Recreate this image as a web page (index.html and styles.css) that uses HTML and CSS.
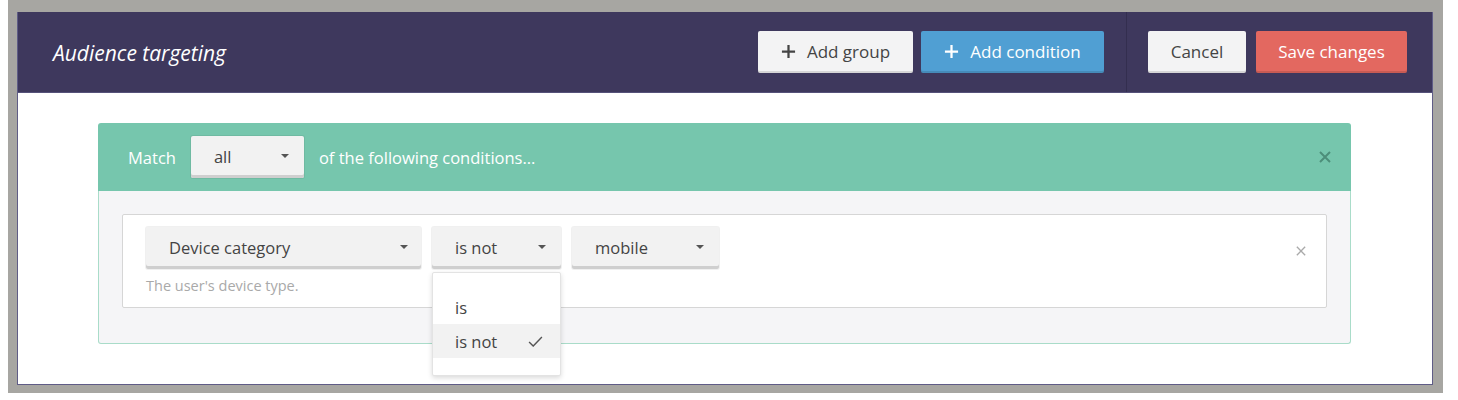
FILE: index.html
```html
<!DOCTYPE html>
<html>
<head>
<meta charset="utf-8">
<link rel="stylesheet" href="styles.css">
</head>
<body>
<div class="frame">
  <div class="window">
    <header class="topbar">
      <h1 class="title">Audience targeting</h1>
      <div class="actions">
        <div class="group-left">
          <button class="btn btn-light"><svg class="plus" viewBox="0 0 16 16"><path d="M8 1v14M1 8h14"/></svg>Add group</button>
          <button class="btn btn-blue"><svg class="plus" viewBox="0 0 16 16"><path d="M8 1v14M1 8h14"/></svg>Add condition</button>
        </div>
        <div class="group-right">
          <button class="btn btn-light btn-cancel">Cancel</button>
          <button class="btn btn-red">Save changes</button>
        </div>
      </div>
    </header>
    <main class="content">
      <section class="panel">
        <div class="panel-head">
          <span class="label">Match</span>
          <div class="select select-all"><span>all</span><i class="caret"></i></div>
          <span class="label">of the following conditions...</span>
          <svg class="close close-head" viewBox="0 0 12 12"><path d="M1 1l10 10M11 1L1 11"/></svg>
        </div>
        <div class="panel-body">
          <div class="card">
            <div class="card-main">
              <div class="row">
                <div class="select select-field"><span>Device category</span><i class="caret"></i></div>
                <div class="op-wrap">
                  <div class="select select-op"><span>is not</span><i class="caret"></i></div>
                  <ul class="menu">
                    <li class="menu-item">is</li>
                    <li class="menu-item active">is not<svg class="check" viewBox="0 0 16 12"><path d="M1 6.5l4.5 4.5L15 1"/></svg></li>
                  </ul>
                </div>
                <div class="select select-val"><span>mobile</span><i class="caret"></i></div>
              </div>
              <p class="hint">The user's device type.</p>
            </div>
            <svg class="close close-card" viewBox="0 0 12 12"><path d="M1 1l10 10M11 1L1 11"/></svg>
          </div>
        </div>
      </section>
    </main>
  </div>
</div>
</body>
</html>
```

FILE: styles.css
```css
* { box-sizing: border-box; }
html, body { margin: 0; padding: 0; background: #fff; }
body { font-family: "Open Sans", "Noto Sans", sans-serif; color: #444; }

.frame {
  margin-left: 8px;
  width: 1435px;
  height: 393px;
  background: #a7a6a2;
  padding: 12px 10px 8px 9px;
}
.window {
  height: 373px;
  background: #fff;
  border: 1px solid #5f5c86;
  border-top: none;
  display: flex;
  flex-direction: column;
}
.topbar {
  height: 81px;
  background: #3e385d;
  display: flex;
  align-items: center;
  justify-content: space-between;
  padding-left: 35px;
  border-bottom: 1px solid #56527a;
}
.title {
  margin: 0 0 -2px;
  font-size: 21px;
  font-weight: 400;
  font-style: italic;
  color: #fff;
}
.actions { display: flex; height: 100%; }
.group-left {
  display: flex;
  align-items: center;
  gap: 8px;
  padding-right: 22px;
  border-right: 1px solid #332e4f;
}
.group-right {
  display: flex;
  align-items: center;
  gap: 10px;
  padding-left: 21px;
  padding-right: 25px;
}
.btn {
  height: 42px;
  border: none;
  border-radius: 2px;
  font-family: "Open Sans", "Noto Sans", sans-serif;
  font-size: 17px;
  display: flex;
  align-items: center;
  justify-content: center;
  gap: 11px;
  padding: 0 0 2px;
  box-shadow: inset 0 -2px 0 rgba(0,0,0,0.12);
  cursor: pointer;
}
.btn-light { background: #f3f3f4; color: #444; width: 155px; }
.btn-blue { background: #509fd3; color: #fff; width: 183px; }
.btn-cancel { width: 98px; }
.btn-red { background: #e36860; color: #fff; width: 151px; }
.plus { width: 15px; height: 15px; fill: none; stroke: currentColor; stroke-width: 2.4; }

.content { flex: 1; padding: 30px 81px 0 80px; }
.panel { position: relative; }
.panel-head {
  height: 68px;
  background: #76c6ad;
  border-radius: 3px 3px 0 0;
  display: flex;
  align-items: center;
  padding-left: 30px;
  padding-right: 20px;
  color: #fff;
  font-size: 16.5px;
}
.label { white-space: nowrap; }
.select {
  height: 42px;
  background: #f2f2f2;
  border-radius: 2px;
  box-shadow: inset 0 -3px 0 #cfcfcf, 0 0 0 1px rgba(0,0,0,0.06);
  display: flex;
  align-items: center;
  justify-content: space-between;
  padding: 0 15px 2px 23px;
  color: #444;
  font-size: 16.5px;
}
.caret {
  width: 0; height: 0;
  border-left: 4px solid transparent;
  border-right: 4px solid transparent;
  border-top: 4px solid #555;
}
.select-all { width: 113px; margin: 0 15px 0 15px; }
.close { fill: none; stroke-width: 2; }
.close-head { width: 12px; height: 12px; stroke: #4d8e7a; margin-left: auto; }

.panel-body {
  background: #f5f5f7;
  border: 1px solid #a9dcc9;
  border-top: none;
  border-radius: 0 0 3px 3px;
  padding: 23px 23px 35px 23px;
}
.card {
  background: #fff;
  border: 1px solid #d6d6d6;
  border-radius: 2px;
  display: flex;
  padding: 12px 20px 0 23px;
  height: 94px;
}
.card-main { flex: 1; }
.row { display: flex; gap: 11px; }
.select-field { width: 275px; padding-right: 13px; }
.select-op { width: 129px; }
.select-val { width: 147px; }
.op-wrap { position: relative; }
.hint { margin: 7px 0 0; font-size: 14.5px; color: #a9a9a9; }
.close-card { width: 10px; height: 10px; stroke: #aaa; stroke-width: 1.6; margin-top: 19px; }

.menu {
  position: absolute;
  top: 45px;
  left: 0;
  width: 129px;
  height: 104px;
  margin: 0;
  padding: 17px 0 0;
  list-style: none;
  background: #fff;
  border: 1px solid #e3e3e3;
  border-radius: 2px;
  box-shadow: 0 2px 5px rgba(0,0,0,0.15);
  z-index: 5;
}
.menu-item {
  height: 34px;
  display: flex;
  align-items: center;
  justify-content: space-between;
  padding: 0 17px 0 22px;
  font-size: 16.5px;
  color: #444;
}
.menu-item.active { background: #f2f2f2; }
.check { width: 15px; height: 11px; fill: none; stroke: #555; stroke-width: 1.5; }
```
